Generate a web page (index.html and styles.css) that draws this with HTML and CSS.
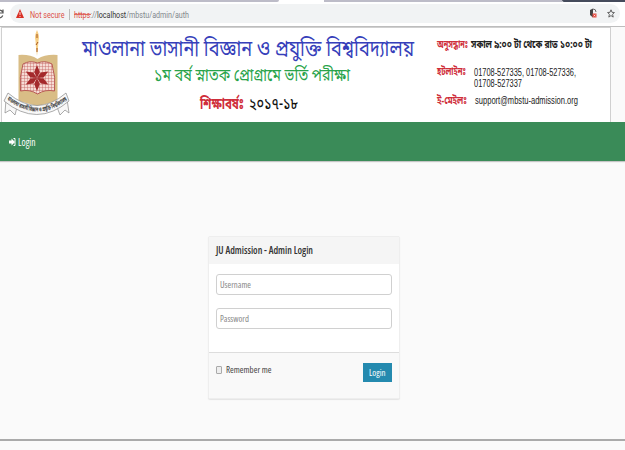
FILE: index.html
```html
<!DOCTYPE html>
<html lang="bn">
<head>
<meta charset="utf-8">
<title>Admin Login</title>
<link rel="stylesheet" href="styles.css">
</head>
<body>
<div class="tabs"><i class="tab-left"></i><i class="tab-mid"></i><i class="tab-end"></i></div>
<div class="toolbar">
  <svg class="reload" width="4" height="12" viewBox="0 0 4 12"><path d="M0 2.2Q2 2.5 2.5 4M0 5h3V1.5M0 9.8Q2 9.5 2.8 7.5" fill="none" stroke="#555" stroke-width="1.2"/></svg>
  <div class="address">
    <svg class="warn" width="8" height="9" viewBox="0 0 8 9"><path d="M4 0 8 9H0Z" fill="#d93025"/><path d="M4 3v3M4 7v1" stroke="#fff" stroke-width=".8"/></svg>
    <svg class="url" width="180" height="14">
      <text x="0" y="10.500" textLength="34.5" lengthAdjust="spacingAndGlyphs" fill="#dc5046">Not secure</text>
      <path d="M39.5 2v11" stroke="#bbb"/>
      <text x="44" y="10.500" textLength="115" lengthAdjust="spacingAndGlyphs" fill="#80868b"><tspan fill="#dc5046">https</tspan>://<tspan fill="#333">localhost</tspan>/mbstu/admin/auth</text>
      <path d="M44 7.500h17" stroke="#dc5046" stroke-width=".8"/>
    </svg>
    <svg class="shield" width="9" height="11" viewBox="0 0 9 11"><path d="M4 .5 1 2v5l3 2.5Z" fill="#444"/><path d="M4 1q3 0 3 3" fill="none" stroke="#666"/><path d="M3.5 5.5h4v4h-4z" fill="#e34d42"/><path d="m4.7 6.7 1.6 1.6m0-1.6L4.7 8.3" stroke="#fff" stroke-width=".6"/></svg>
    <svg class="star" width="8" height="9" viewBox="0 0 8 9"><path d="m4 .8 1 2.5 2.4.2-1.8 1.8.6 2.8L4 6.6 1.8 8.1l.6-2.8L.6 3.5 3 3.3Z" fill="none" stroke="#555" stroke-width=".9"/></svg>
  </div>
</div>
<header class="banner">
  <svg class="logo" width="70" height="94" viewBox="2 28 70 94">
    <defs><pattern id="net" width="3" height="3" patternUnits="userSpaceOnUse"><path d="M0 0h3M0 0v3" stroke="#c0605c" stroke-width=".8"/></pattern></defs>
    <path d="M37 30q-3 6-1.500 11 .5 9 1.500 15 1-6 1.500-15 1.500-5-1.500-11Z" fill="#f7cf85"/>
    <path d="M37 34v4M38 42l-2 3M37 48v4" stroke="#a55520" stroke-width="1"/>
    <path d="M18.500 55q11-1 19 4 8-5 20-4v46l-20 5-19-5Z" fill="#d9bd86"/>
    <path d="M23 64q7-4 14.500-1 7.500-3 14.500 1 4 13 2.500 27-9-2-17 3-8-5-17-3-1.500-14 2.500-27Z" fill="#f6dcd5" stroke="#b75b53"/>
    <path d="M23 64q7-4 14.500-1 7.500-3 14.500 1 4 13 2.500 27-9-2-17 3-8-5-17-3-1.500-14 2.500-27Z" fill="url(#net)"/>
    <g fill="#a4292b"><path id="petal" d="m37 78-2.800-6 2.800-7 2.800 7Z"/><use href="#petal" transform="rotate(60 37 78)"/><use href="#petal" transform="rotate(120 37 78)"/><use href="#petal" transform="rotate(180 37 78)"/><use href="#petal" transform="rotate(240 37 78)"/><use href="#petal" transform="rotate(300 37 78)"/></g>
    <path d="m6 99-1 14 5-3 5 5 2-8m50-8 2 14-4-3-5 5-3-8" fill="#f8f8f8" stroke="#888" stroke-width=".7"/>
    <path d="M8 93q29 25 58 0l3 8q-32 27-65 0Z" fill="#f8f8f8" stroke="#888" stroke-width=".7"/>
    <path id="ribbon" d="M7 99.500q30 24 61 0" fill="none"/>
    <text class="motto"><textPath href="#ribbon" textLength="66" lengthAdjust="spacingAndGlyphs">মাওলানা ভাসানী বিজ্ঞান ও প্রযুক্তি বিশ্ববিদ্যালয়</textPath></text>
  </svg>
  <svg class="titles" width="538" height="94" viewBox="72 28 538 94">
    <g class="bn">
    <text x="82" y="56" font-size="23" textLength="332" lengthAdjust="spacingAndGlyphs" fill="#363fba">মাওলানা ভাসানী বিজ্ঞান ও প্রযুক্তি বিশ্ববিদ্যালয়</text>
    <text x="154" y="80.500" font-size="18" textLength="196" lengthAdjust="spacingAndGlyphs" fill="#28a34a">১ম বর্ষ স্নাতক প্রোগ্রামে ভর্তি পরীক্ষা</text>
    <text x="200" y="109" font-size="16" textLength="44" lengthAdjust="spacingAndGlyphs" fill="#cf2e3a" class="bold">শিক্ষাবর্ষঃ</text>
    <text x="249" y="109" font-size="16" textLength="49" lengthAdjust="spacingAndGlyphs" fill="#111" class="medium">২০১৭-১৮</text>
    <g class="bold" font-size="10.500">
    <text x="437" y="48" textLength="31" lengthAdjust="spacingAndGlyphs" fill="#cf2e3a">অনুসন্ধানঃ</text>
    <text x="471" y="48" textLength="121" lengthAdjust="spacingAndGlyphs" fill="#222">সকাল ৯:০০ টা থেকে রাত ১০:০০ টা</text>
    <text x="437" y="75" textLength="29" lengthAdjust="spacingAndGlyphs" fill="#cf2e3a">হটলাইনঃ</text>
    <text x="437" y="103.500" textLength="30" lengthAdjust="spacingAndGlyphs" fill="#cf2e3a">ই-মেইলঃ</text>
    </g></g>
    <g class="contact">
    <text x="474" y="75.500" textLength="102" lengthAdjust="spacingAndGlyphs">01708-527335, 01708-527336,</text>
    <text x="474" y="86.500" textLength="48" lengthAdjust="spacingAndGlyphs">01708-527337</text>
    <text x="475" y="103.500" textLength="103" lengthAdjust="spacingAndGlyphs">support@mbstu-admission.org</text>
    </g>
  </svg>
</header>
<nav class="nav">
  <svg width="28" height="14" viewBox="0 0 28 14"><path d="M0 5.500h2.500V3.500L6 7 2.500 10.500v-2H0Z" fill="#fff"/><path d="M4.500 3.500H6v7H4.500" fill="none" stroke="#fff"/><text x="9" y="10.500" textLength="17.500" lengthAdjust="spacingAndGlyphs" class="nav-text">Login</text></svg>
</nav>
<main class="page">
  <form class="card">
    <h1 class="card-head"><svg width="100" height="14"><text x="0" y="10" textLength="97" lengthAdjust="spacingAndGlyphs">JU Admission - Admin Login</text></svg></h1>
    <div class="fields">
      <div class="field"><svg width="60" height="14"><text x="0" y="10" textLength="31" lengthAdjust="spacingAndGlyphs">Username</text></svg></div>
      <div class="field"><svg width="60" height="14"><text x="0" y="10" textLength="29" lengthAdjust="spacingAndGlyphs">Password</text></svg></div>
    </div>
    <div class="card-foot">
      <label class="remember"><i class="box"></i><svg width="60" height="14"><text x="0" y="10" textLength="45.500" lengthAdjust="spacingAndGlyphs">Remember me</text></svg></label>
      <button class="login" type="button"><svg width="17" height="14"><text x="0" y="10" textLength="16.500" lengthAdjust="spacingAndGlyphs">Login</text></svg></button>
    </div>
  </form>
</main>
<div class="page-end"></div>
</body>
</html>
```
FILE: styles.css
```css
* { box-sizing: border-box; }
body { margin: 0; width: 625px; height: 450px; overflow: hidden; background: #fafafa; font-family: "Open Sans", sans-serif; }
svg { display: block; flex: none; overflow: visible; }
.tabs { display: flex; height: 2px; background: #fff; }
.tab-left { width: 279px; background: #bdbcc8; border-bottom-right-radius: 2px; }
.tab-mid { width: 238px; margin-left: 45px; background: #bdbcc8; }
.tab-end { flex: 1; background: #454b5c; border-bottom-left-radius: 2px; }
.toolbar { display: flex; align-items: center; height: 25px; padding-bottom: 1px; background: #fff; border-bottom: 1px solid #bdbdbd; }
.reload { margin-right: 6px; }
.address { display: flex; align-items: center; width: 610px; height: 19px; padding-left: 6px; border-radius: 10px; background: #f1f3f4; }
.url { margin-left: 6px; font: 9px Roboto, sans-serif; }
.shield { margin-left: auto; margin-right: 9px; }
.star { margin-right: 5px; }
.banner { display: flex; width: 610px; height: 95px; margin-left: 1px; background: #fff; border: 1px solid #d0d0d0; border-bottom: 0; }
.bn { font-family: "Noto Sans Bengali", "Noto Serif Bengali", "Lohit Bengali", "Noto Sans", sans-serif; }
.bold { font-weight: 700; }
.medium { font-weight: 500; }
.motto { font: 700 6px "Noto Sans Bengali", "Noto Sans", sans-serif; fill: #333; }
.contact { font: 10px "Liberation Sans", sans-serif; fill: #222; }
.nav { display: flex; align-items: center; height: 39px; padding-left: 9px; padding-top: 1px; background: #3a8b58; box-shadow: 0 1px 1px #c5c5c5; }
.nav-text { font-size: 10px; font-stretch: 75%; fill: #fff; }
.page { display: flex; justify-content: center; align-items: flex-start; height: 278px; padding: 75px 17px 0 0; }
.card { width: 192px; height: 163px; margin: 0; background: #fff; border: 1px solid #eee; border-radius: 2px; box-shadow: 0 1px 1px #e4e4e4; }
.card-head { display: flex; align-items: center; height: 27px; margin: 0; padding-left: 7px; background: #f5f5f5; font-size: 10px; font-weight: 600; font-stretch: 75%; fill: #333; }
.fields { display: flex; flex-direction: column; gap: 13px; height: 88px; padding: 10px 7px 0; }
.field { display: flex; align-items: center; height: 21px; padding-left: 3px; border: 1px solid #d0d0d0; border-radius: 3px; background: #fff; font-size: 9px; font-stretch: 75%; fill: #888; }
.card-foot { display: flex; justify-content: space-between; align-items: flex-start; height: 46px; padding: 10px 7px 0; background: #f9f9f9; border-top: 1px solid #ddd; }
.remember { display: flex; align-items: center; gap: 4px; font-size: 9px; font-stretch: 75%; fill: #444; }
.box { width: 6px; height: 8px; border: 1px solid #aaa; border-radius: 1px; background: #eee; }
.login { display: flex; align-items: center; justify-content: center; width: 29px; height: 19px; padding: 0; border: 0; background: #248aaf; font: 9px "Open Sans", sans-serif; font-stretch: 75%; fill: #fff; }
.page-end { height: 2px; background: #aaa; }
```
